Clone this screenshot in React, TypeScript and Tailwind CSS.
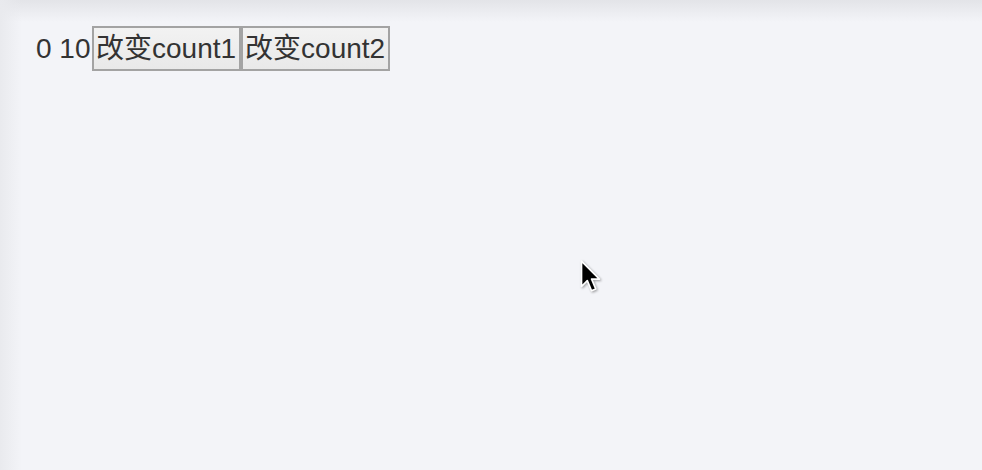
import { useState } from "react";

export default function App() {
  const [count1, setCount1] = useState(0);
  const [count2, setCount2] = useState(10);

  return (
    <div className="relative w-[982px] h-[470px] overflow-hidden bg-[#f3f4f8] text-[#333] font-['Liberation_Sans','Noto_Sans_CJK_SC',sans-serif]">
      {/* window edge shading */}
      <div className="absolute inset-x-0 top-0 h-[22px] bg-gradient-to-b from-[#e3e4e8] to-[#f3f4f8]" />
      <div className="absolute inset-y-0 left-0 w-[22px] bg-gradient-to-r from-[#e9eaee] to-transparent" />

      <div className="relative flex items-center pl-[36px] pt-[26px] text-[28px]">
        <span className="pr-[1px] leading-[45px]">
          {count1} {count2}
        </span>
        <button
          className="h-[45px] border-2 border-[#a3a3a3] bg-gradient-to-b from-[#f2f2f2] to-[#e9e9e9] px-[2.5px] leading-[41px]"
          onClick={() => setCount1(count1 + 1)}
        >
          改变count1
        </button>
        <button
          className="h-[45px] border-2 border-[#a3a3a3] bg-gradient-to-b from-[#f2f2f2] to-[#e9e9e9] px-[2.5px] leading-[41px]"
          onClick={() => setCount2(count2 + 1)}
        >
          改变count2
        </button>
      </div>

      {/* mouse pointer */}
      <svg
        className="absolute left-[577px] top-[258px]"
        width="28"
        height="38"
        viewBox="0 0 26 36"
      >
        <path
          d="M4 3 L4 27 L9.5 21.5 L13.5 31 L17.5 29.3 L13.6 20 L21 20 Z"
          fill="#000"
          stroke="#fff"
          strokeWidth="1.6"
          strokeLinejoin="round"
          style={{ filter: "drop-shadow(1px 1px 1px rgba(0,0,0,0.35))" }}
        />
      </svg>
    </div>
  );
}
